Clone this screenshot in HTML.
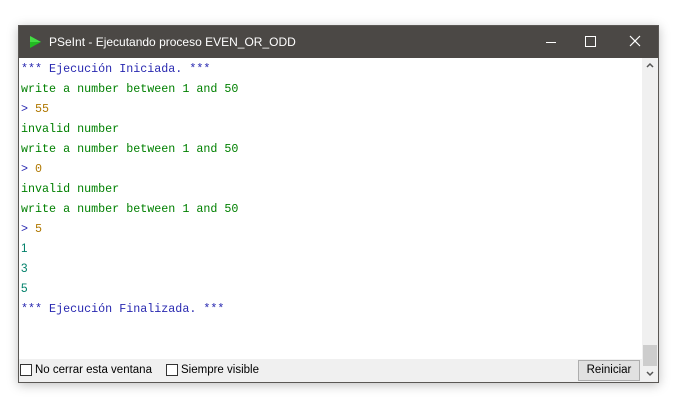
<!DOCTYPE html>
<html><head><style>
body{margin:0;width:681px;height:408px;background:#fff;position:relative;overflow:hidden;font-family:"Liberation Sans",sans-serif}
.win{position:absolute;left:18px;top:25px;width:641px;height:358px;background:#fff;border:1px solid #5a5754;box-sizing:border-box;box-shadow:0 2px 10px rgba(0,0,0,.25)}
.title{position:absolute;left:0;top:0;width:100%;height:32px;background:#4b4845;color:#fff;font-size:12px}
.title span{position:absolute;left:30px;top:9px}
.out{position:absolute;left:2px;top:33px;font-family:"Liberation Mono",monospace;font-size:11.7px;line-height:20px;white-space:pre}
.out div{height:20px}
.b{color:#2828b0}.g{color:#008000}.o{color:#b07800}.t{color:#00806a;font-family:"Liberation Sans",sans-serif;font-size:11.7px}
.sb{position:absolute;right:0;top:32px;width:16px;height:324px;background:#f0f0f0}
.bar{position:absolute;left:0;bottom:0;width:624px;height:23px;background:#f0f0f0;font-size:11.5px;color:#000}
.cb{position:absolute;top:5px;width:12px;height:12px;border:1px solid #333;box-sizing:border-box;background:#fff}
</style></head><body>
<div class="win">
<div class="title">
<svg style="position:absolute;left:9px;top:9px" width="14" height="14"><path d="M2 1 L13 7 L2 13 Z" fill="#22bb22"/><path d="M2 1 L13 7 L2 7Z" fill="#44dd44"/></svg>
<span>PSeInt - Ejecutando proceso EVEN_OR_ODD</span>
<div style="position:absolute;left:527px;top:16px;width:10px;height:1px;background:#fff"></div>
<div style="position:absolute;left:566px;top:10px;width:9px;height:9px;border:1px solid #fff"></div>
<svg style="position:absolute;left:610px;top:9px" width="12" height="12"><path d="M1 1L11 11M11 1L1 11" stroke="#fff" stroke-width="1.2"/></svg>
</div>
<div class="out"><div class="b">*** Ejecución Iniciada. ***</div><div class="g">write a number between 1 and 50</div><div><span class="b">&gt; </span><span class="o">55</span></div><div class="g">invalid number</div><div class="g">write a number between 1 and 50</div><div><span class="b">&gt; </span><span class="o">0</span></div><div class="g">invalid number</div><div class="g">write a number between 1 and 50</div><div><span class="b">&gt; </span><span class="o">5</span></div><div class="t">1</div><div class="t">3</div><div class="t">5</div><div class="b">*** Ejecución Finalizada. ***</div></div>
<div class="sb">
<svg style="position:absolute;left:4px;top:4px" width="8" height="6"><path d="M1 5L4 2L7 5" stroke="#555" stroke-width="1.5" fill="none"/></svg>
<div style="position:absolute;left:1px;top:287px;width:14px;height:21px;background:#cdcdcd"></div>
<svg style="position:absolute;left:4px;top:313px" width="8" height="6"><path d="M1 1L4 4L7 1" stroke="#555" stroke-width="1.5" fill="none"/></svg>
</div>
<div class="bar">
<div class="cb" style="left:1px"></div><span style="position:absolute;left:16px;top:5px">No cerrar esta ventana</span>
<div class="cb" style="left:147px"></div><span style="position:absolute;left:162px;top:5px">Siempre visible</span>
<div style="position:absolute;left:559px;top:1px;width:62px;height:21px;border:1px solid #adadad;background:#e1e1e1;box-sizing:border-box;text-align:center;line-height:19px">Reiniciar</div>
</div>
</div>
</body></html>
